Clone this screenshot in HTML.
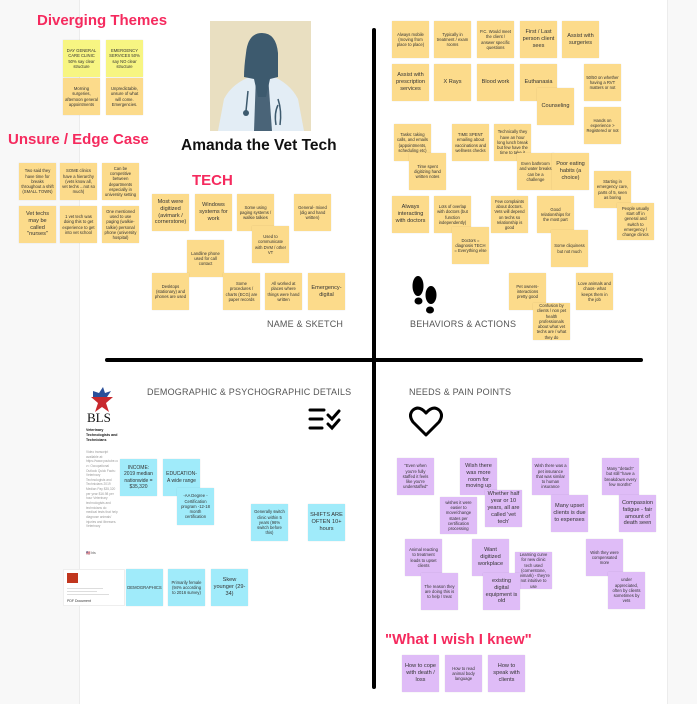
<!DOCTYPE html>
<html><head><meta charset="utf-8"><style>
*{margin:0;padding:0;box-sizing:border-box}
body{width:697px;height:704px;position:relative;background:#fff;font-family:"Liberation Sans",sans-serif;overflow:hidden}
.n{position:absolute;width:37px;height:37px;background:#fcdb8b;font-size:4.2px;line-height:1.25;color:#333;display:flex;align-items:center;justify-content:center;text-align:center;padding:2px;overflow:hidden;box-shadow:0 0 1px rgba(0,0,0,.15)}
.b{font-size:5.6px}
.y2{background:#f7f582}
.c{background:#a0ebfa}
.p{background:#dfbcf7}
.t{position:absolute;color:#f52a5e;font-weight:bold;font-size:15px;white-space:nowrap}
.l{position:absolute;color:#555;font-size:9px;white-space:nowrap;letter-spacing:.2px}
</style></head><body>
<div style="position:absolute;left:0;top:0;width:80px;height:704px;background:#f8f8f8;border-right:1px solid #ececec"></div>
<div style="position:absolute;left:667px;top:0;width:30px;height:704px;background:#f8f8f8;border-left:1px solid #ececec"></div>

<div style="position:absolute;left:372px;top:28px;width:4px;height:661px;background:#000;border-radius:2px"></div>
<div style="position:absolute;left:105px;top:358px;width:538px;height:4px;background:#000;border-radius:2px"></div>

<div class="t" style="left:37px;top:12px">Diverging Themes</div>
<div class="n y2" style="left:63px;top:40px">DAY GENERAL CARE CLINIC 50% say clear structure</div>
<div class="n y2" style="left:106px;top:40px">EMERGENCY SERVICES 50% say NO clear structure</div>
<div class="n" style="left:63px;top:78px">Morning surgeries, afternoon general appointments</div>
<div class="n" style="left:106px;top:78px">Unpredictable, unsure of what will come. Emergencies.</div>

<div class="t" style="left:8px;top:131px">Unsure / Edge Case</div>
<div class="n" style="left:19px;top:163px">Two said they have time for breaks throughout a shift (SMALL TOWN)</div>
<div class="n" style="left:60px;top:163px">SOME clinics have a hierarchy (vets know all, vet techs ...not so much)</div>
<div class="n" style="left:102px;top:163px">Can be competitive between departments especially in university setting</div>
<div class="n b" style="left:19px;top:206px">Vet techs may be called "nurses"</div>
<div class="n" style="left:60px;top:206px">1 vet tech was doing this to get experience to get into vet school</div>
<div class="n" style="left:102px;top:206px">One mentioned used to use paging (walkie-talkie) personal phone (university hospital)</div>

<svg style="position:absolute;left:210px;top:21px" width="101" height="110" viewBox="0 0 101 110">
<rect width="101" height="110" fill="#e9dfc1"/>
<path d="M8 110 L14 78 Q22 62 44 54 L60 54 Q80 62 88 78 L94 110Z" fill="#e3edf5"/>
<path d="M46 54 L58 54 L62 110 L44 110Z" fill="#4a6478"/>
<path d="M52 12 Q38 12 36 32 Q34 46 34 56 L44 58 L48 76 L56 76 L60 58 L68 56 Q68 44 68 32 Q66 12 52 12Z" fill="#3d5a6e"/>
<path d="M38 70 L36 90" stroke="#3d5a6e" stroke-width="1.5" fill="none"/><circle cx="36" cy="92" r="3" fill="#3d5a6e"/>
<path d="M68 78 Q72 90 70 104 M66 104 Q64 92 68 84" stroke="#3d5a6e" stroke-width="1.5" fill="none"/>
</svg>
<div style="position:absolute;left:181px;top:137px;font-weight:bold;font-size:15.5px;color:#111">Amanda the Vet Tech</div>

<div class="t" style="left:192px;top:172px">TECH</div>
<div class="n b" style="left:152px;top:194px">Most were digitized (avimark / cornerstone)</div>
<div class="n b" style="left:195px;top:194px">Windows systems for work</div>
<div class="n" style="left:237px;top:194px">Some using paging systems / walkie talkies</div>
<div class="n" style="left:294px;top:194px">General- mixed (dig and hand written)</div>
<div class="n" style="left:252px;top:226px">Used to communicate with DVM / other VT</div>
<div class="n" style="left:187px;top:240px">Landline phone used for call contact</div>
<div class="n" style="left:152px;top:273px">Desktops (stationary) and phones are used</div>
<div class="n" style="left:223px;top:273px">Some procedures / charts (ECG) are paper records</div>
<div class="n" style="left:265px;top:273px">All worked at places where things were hand written</div>
<div class="n b" style="left:308px;top:273px">Emergency- digital</div>
<div class="l" style="left:267px;top:319px">NAME &amp; SKETCH</div>

<div class="n" style="left:392px;top:21px">Always mobile (moving from place to place)</div>
<div class="n" style="left:434px;top:21px">Typically in treatment / exam rooms</div>
<div class="n" style="left:477px;top:21px">P.C. Would meet the client / answer specific questions</div>
<div class="n b" style="left:520px;top:21px">First / Last person client sees</div>
<div class="n b" style="left:562px;top:21px">Assist with surgeries</div>
<div class="n b" style="left:392px;top:64px">Assist with prescription services</div>
<div class="n b" style="left:434px;top:64px">X Rays</div>
<div class="n b" style="left:477px;top:64px">Blood work</div>
<div class="n b" style="left:520px;top:64px">Euthanasia</div>
<div class="n b" style="left:537px;top:88px">Counseling</div>
<div class="n" style="left:584px;top:64px">50/50 on whether having a RVT matters or not</div>
<div class="n" style="left:584px;top:107px">Hands on experience &gt; Registered or not</div>
<div class="n" style="left:394px;top:124px">Tasks: taking calls, and emails (appointments, scheduling etc)</div>
<div class="n" style="left:452px;top:124px">TIME SPENT emailing about vaccinations and wellness checks</div>
<div class="n" style="left:494px;top:124px">Technically they have an hour long lunch break but few have the time to take it</div>
<div class="n" style="left:409px;top:153px">Time spent digitizing hand written notes</div>
<div class="n" style="left:517px;top:153px">Even bathroom and water breaks can be a challenge</div>
<div class="n b" style="left:552px;top:153px">Poor eating habits (a choice)</div>
<div class="n" style="left:594px;top:171px">Starting in emergency care, parts of 5, seen as boring</div>
<div class="n" style="left:617px;top:203px">People usually start off in general and switch to emergency / change clinics</div>
<div class="n b" style="left:392px;top:196px">Always interacting with doctors</div>
<div class="n" style="left:434px;top:196px">Lots of overlap with doctors (but function independently)</div>
<div class="n" style="left:452px;top:227px">Doctors = diagnosis TECH = Everything else</div>
<div class="n" style="left:491px;top:196px">Few complaints about doctors. Vets will depend on techs so relationship is good</div>
<div class="n" style="left:537px;top:196px">Good relationships for the most part</div>
<div class="n" style="left:551px;top:230px">Some cliquiness but not much</div>
<div class="n" style="left:509px;top:273px">Pet owners- interactions pretty good</div>
<div class="n" style="left:533px;top:303px">Confusion by clients / non pet health professionals about what vet techs are / what they do</div>
<div class="n" style="left:576px;top:273px">Love animals and chaos- what keeps them in the job</div>
<svg style="position:absolute;left:411px;top:275px" width="28" height="40" viewBox="0 0 28 40">
<ellipse cx="7" cy="11" rx="5.5" ry="10" fill="#000"/><ellipse cx="7.5" cy="26" rx="4" ry="3.5" fill="#000"/>
<ellipse cx="20" cy="20" rx="5.5" ry="9" fill="#000"/><ellipse cx="19" cy="35" rx="4" ry="3.5" fill="#000"/>
</svg>
<div class="l" style="left:410px;top:319px">BEHAVIORS &amp; ACTIONS</div>

<svg style="position:absolute;left:87px;top:385px" width="30" height="38" viewBox="0 0 30 38">
<path d="M6 6 L12 8 L16 2 L18 8 L24 6 L20 12 L6 12Z" fill="#2a4f9a"/>
<path d="M4 12 L26 12 L19 18 L22 27 L15 22 L8 27 L11 18Z" fill="#c8282d"/>
<text x="0" y="37" font-family="Liberation Serif,serif" font-size="13" fill="#111">BLS</text>
</svg>
<div style="position:absolute;left:86px;top:428px;width:32px;font-size:3.6px;font-weight:bold;line-height:1.4;color:#111">Veterinary Technologists and Technicians</div>
<div style="position:absolute;left:86px;top:450px;width:32px;height:95px;font-size:3.2px;line-height:1.45;color:#999;overflow:hidden">Video transcript available at: https://www.youtube.com/watch?v= Occupational Outlook Quick Facts: Veterinary Technologists and Technicians 2019 Median Pay $35,320 per year $16.98 per hour Veterinary technologists and technicians do medical tests that help diagnose animals' injuries and illnesses. Veterinary</div>
<div style="position:absolute;left:86px;top:551px;font-size:3.5px;color:#555">🇺🇸 bls</div>
<div class="l" style="left:147px;top:387px">DEMOGRAPHIC &amp; PSYCHOGRAPHIC DETAILS</div>
<svg style="position:absolute;left:308px;top:407px" width="33" height="24" viewBox="0 0 33 24">
<g stroke="#000" stroke-width="3" stroke-linecap="round" fill="none"><path d="M2 3H16M2 12H14M2 21H14M20 8L24 12L31 4M20 17L24 21L31 13"/></g>
</svg>
<div class="n c b" style="left:120px;top:459px;font-size:5px">INCOME: 2019 median nationwide = $35,320</div>
<div class="n c b" style="left:163px;top:459px;font-size:5px">EDUCATION- A wide range</div>
<div class="n c" style="left:177px;top:488px">-AA Degree - Certification program -12-18 month certification</div>
<div class="n c" style="left:251px;top:504px">Generally switch clinic within 5 years (96% switch before this)</div>
<div class="n c b" style="left:308px;top:504px">SHIFTS ARE OFTEN 10+ hours</div>
<div style="position:absolute;left:63px;top:569px;width:62px;height:37px;background:#fff;border:1px solid #eee">
<div style="position:absolute;left:3px;top:3px;width:11px;height:10px;background:#c1361e"></div>
<div style="position:absolute;left:3px;top:18px;width:36px;height:1px;background:#ddd"></div>
<div style="position:absolute;left:3px;top:21px;width:30px;height:1px;background:#ddd"></div>
<div style="position:absolute;left:3px;top:24px;width:42px;height:1px;background:#ddd"></div>
<div style="position:absolute;left:3px;top:29px;font-size:3.5px;color:#333">PDF Document</div></div>
<div class="n c" style="left:126px;top:569px">DEMOGRAPHICS</div>
<div class="n c" style="left:168px;top:569px">Primarily female (94% according to 2016 survey)</div>
<div class="n c b" style="left:211px;top:569px">Skew younger (29-34)</div>

<div class="l" style="left:409px;top:387px">NEEDS &amp; PAIN POINTS</div>
<svg style="position:absolute;left:409px;top:406px" width="34" height="32" viewBox="0 0 34 32">
<path d="M17 29 L4 16 Q-1 9 4 4 Q10 -1 17 7 Q24 -1 30 4 Q35 9 30 16Z" fill="none" stroke="#000" stroke-width="3" stroke-linejoin="round"/>
</svg>
<div class="n p" style="left:397px;top:458px">"Even when you're fully staffed it feels like you're understaffed"</div>
<div class="n p b" style="left:460px;top:458px">Wish there was more room for moving up</div>
<div class="n p" style="left:532px;top:458px">Wish there was a pet insurance that was similar to human insurance</div>
<div class="n p" style="left:602px;top:458px">Many "detach" but still "have a breakdown every few months"</div>
<div class="n p" style="left:440px;top:497px">wishes it were easier to move/change states per certification processing</div>
<div class="n p b" style="left:485px;top:490px">Whether half year or 10 years, all are called 'vet tech'</div>
<div class="n p b" style="left:551px;top:495px">Many upset clients is due to expenses</div>
<div class="n p b" style="left:619px;top:495px">Compassion fatigue - fair amount of death seen</div>
<div class="n p" style="left:405px;top:539px">Animal reacting to treatment leads to upset clients</div>
<div class="n p b" style="left:472px;top:539px">Want digitized workplace</div>
<div class="n p" style="left:515px;top:552px">Learning curve for new clinic tech used (cornerstone, Avimark) - they're not intuitive to use</div>
<div class="n p b" style="left:483px;top:573px">existing digital equipment is old</div>
<div class="n p" style="left:421px;top:573px">The reason they are doing this is to help / treat</div>
<div class="n p" style="left:586px;top:539px">Wish they were compensated more</div>
<div class="n p" style="left:608px;top:572px">under appreciated, often by clients sometimes by vets</div>

<div class="t" style="left:385px;top:631px">"What I wish I knew"</div>
<div class="n p b" style="left:402px;top:655px">How to cope with death / loss</div>
<div class="n p" style="left:445px;top:655px">How to read animal body language</div>
<div class="n p b" style="left:488px;top:655px">How to speak with clients</div>
</body></html>
